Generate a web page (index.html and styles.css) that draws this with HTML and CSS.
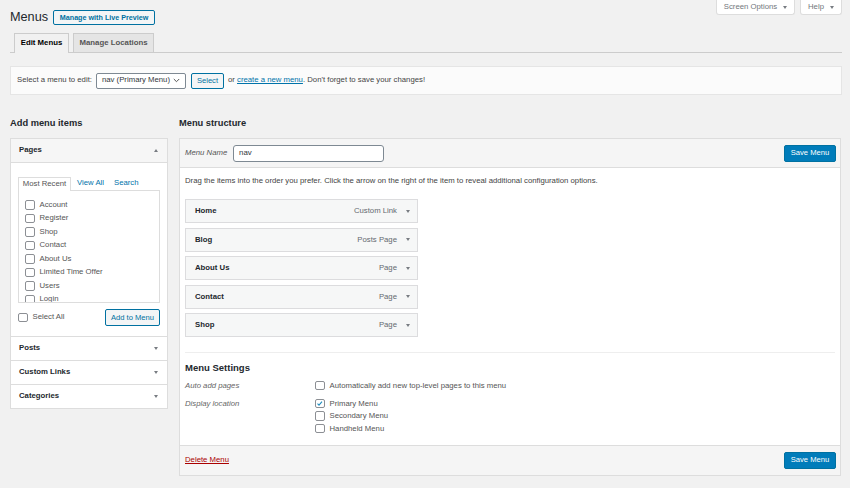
FILE: index.html
```html
<!DOCTYPE html>
<html lang="en">
<head>
<meta charset="utf-8">
<title>Menus</title>
<link rel="stylesheet" href="styles.css">
</head>
<body>
<div class="wrap">
  <div class="top">
    <div class="title-row">
      <h1 class="page-title">Menus</h1>
      <a class="btn btn-secondary btn-preview">Manage with Live Preview</a>
    </div>
    <div class="screen-meta">
      <div class="meta-tab meta-screen">Screen Options <span class="tri-down"></span></div>
      <div class="meta-tab meta-help">Help <span class="tri-down"></span></div>
    </div>
  </div>

  <div class="nav-tabs">
    <div class="nav-tab active tab-edit">Edit Menus</div>
    <div class="nav-tab tab-loc">Manage Locations</div>
  </div>

  <div class="manage-menus">
    <span>Select a menu to edit:</span>
    <div class="select">nav (Primary Menu)
      <svg class="chev" width="7" height="5" viewBox="0 0 7 5"><polyline points="0.8,1 3.5,3.7 6.2,1" fill="none" stroke="#555" stroke-width="1"/></svg>
    </div>
    <a class="btn btn-secondary btn-select">Select</a>
    <span>or <a class="link">create a new menu</a>. Don't forget to save your changes!</span>
  </div>

  <div class="columns">
    <div class="col-left">
      <h2 class="col-heading">Add menu items</h2>
      <div class="acc">
        <div class="acc-title open">Pages <span class="tri-up"></span></div>
        <div class="acc-content">
          <div class="tabs">
            <span class="tab active">Most Recent</span>
            <a class="tab link-plain">View All</a>
            <a class="tab link-plain">Search</a>
          </div>
          <div class="panel">
            <label class="row"><span class="cb"></span>Account</label>
            <label class="row"><span class="cb"></span>Register</label>
            <label class="row"><span class="cb"></span>Shop</label>
            <label class="row"><span class="cb"></span>Contact</label>
            <label class="row"><span class="cb"></span>About Us</label>
            <label class="row"><span class="cb"></span>Limited Time Offer</label>
            <label class="row"><span class="cb"></span>Users</label>
            <label class="row"><span class="cb"></span>Login</label>
          </div>
          <div class="panel-actions">
            <label class="row select-all"><span class="cb"></span>Select All</label>
            <a class="btn btn-secondary btn-add">Add to Menu</a>
          </div>
        </div>
        <div class="acc-title">Posts <span class="tri-down"></span></div>
        <div class="acc-title">Custom Links <span class="tri-down"></span></div>
        <div class="acc-title">Categories <span class="tri-down"></span></div>
      </div>
    </div>

    <div class="col-right">
      <h2 class="col-heading">Menu structure</h2>
      <div class="menu-edit">
        <div class="menu-header">
          <label class="menu-name-label">Menu Name</label>
          <div class="input">nav</div>
          <a class="btn btn-primary save-top">Save Menu</a>
        </div>
        <div class="menu-body">
          <p class="instructions">Drag the items into the order you prefer. Click the arrow on the right of the item to reveal additional configuration options.</p>
          <ul class="menu-items">
            <li class="item"><span class="item-title">Home</span><span class="item-type">Custom Link <span class="tri-down"></span></span></li>
            <li class="item"><span class="item-title">Blog</span><span class="item-type">Posts Page <span class="tri-down"></span></span></li>
            <li class="item"><span class="item-title">About Us</span><span class="item-type">Page <span class="tri-down"></span></span></li>
            <li class="item"><span class="item-title">Contact</span><span class="item-type">Page <span class="tri-down"></span></span></li>
            <li class="item"><span class="item-title">Shop</span><span class="item-type">Page <span class="tri-down"></span></span></li>
          </ul>
          <div class="settings">
            <h3 class="settings-heading">Menu Settings</h3>
            <div class="settings-grid">
              <div class="set-label">Auto add pages</div>
              <div class="set-opts">
                <label class="row"><span class="cb"></span>Automatically add new top-level pages to this menu</label>
              </div>
              <div class="set-label">Display location</div>
              <div class="set-opts">
                <label class="row"><span class="cb checked"><svg width="9" height="9" viewBox="0 0 9 9"><polyline points="1.8,4.6 3.6,6.4 7.2,2.2" fill="none" stroke="#1e8cbe" stroke-width="1.3"/></svg></span>Primary Menu</label>
                <label class="row"><span class="cb"></span>Secondary Menu</label>
                <label class="row"><span class="cb"></span>Handheld Menu</label>
              </div>
            </div>
          </div>
        </div>
        <div class="menu-footer">
          <a class="delete">Delete Menu</a>
          <a class="btn btn-primary">Save Menu</a>
        </div>
      </div>
    </div>
  </div>
</div>
</body>
</html>
```

FILE: styles.css
```css
* { box-sizing: border-box; }

html, body {
  margin: 0;
  padding: 0;
  background: #f1f1f1;
}

body {
  font-family: "Liberation Sans", Arial, sans-serif;
  font-size: 7.75px;
  color: #444;
  line-height: 1.3;
}

a { text-decoration: none; }

.wrap {
  padding: 0 8px 0 10px;
  height: 488px;
}

/* header */
.top {
  display: flex;
  justify-content: space-between;
  align-items: flex-start;
  height: 25px;
}

.title-row {
  margin-top: 10px;
  display: flex;
  align-items: center;
  gap: 5px;
}

.page-title {
  margin: 0;
  font-size: 12.7px;
  font-weight: 400;
  color: #23282d;
  line-height: 15px;
}

.btn {
  display: inline-flex;
  align-items: center;
  justify-content: center;
  border-radius: 2px;
  white-space: nowrap;
  font-size: 7.6px;
}

.btn-secondary {
  border: 1px solid #0071a1;
  color: #0071a1;
  background: #f3f5f6;
}

.btn-primary {
  background: #007cba;
  border: 1px solid #0071a1;
  color: #fff;
  width: 52px;
  height: 17px;
}

.btn-preview {
  width: 102px;
  height: 15px;
  font-weight: 700;
  font-size: 7.2px;
}

.screen-meta {
  display: flex;
  gap: 5px;
}

.meta-tab {
  height: 15px;
  background: #fff;
  border: 1px solid #ddd;
  border-top: 0;
  border-radius: 0 0 3px 3px;
  color: #72777c;
  display: flex;
  align-items: center;
  justify-content: center;
  gap: 6px;
}

.meta-screen { width: 79px; }
.meta-help { width: 42px; }

.tri-down,
.tri-up {
  display: inline-block;
  width: 0;
  height: 0;
  border-left: 2.5px solid transparent;
  border-right: 2.5px solid transparent;
}

.tri-down { border-top: 3px solid #787c82; }
.tri-up { border-bottom: 3px solid #787c82; }

/* nav tabs */
.nav-tabs {
  margin-top: 8px;
  display: flex;
  gap: 4px;
  padding-left: 4px;
  height: 20px;
  border-bottom: 1px solid #ccc;
  align-items: flex-start;
}

.nav-tab {
  height: 20px;
  border: 1px solid #ccc;
  border-bottom: 0;
  background: #e5e5e5;
  color: #555;
  font-weight: 700;
  display: flex;
  align-items: center;
  justify-content: center;
  font-size: 7.8px;
  white-space: nowrap;
}

.nav-tab.active {
  background: #f1f1f1;
  color: #000;
  height: 20px;
}

.tab-edit { width: 55px; }
.tab-loc { width: 81px; height: 19px; }

/* manage menus */
.manage-menus {
  margin-top: 13px;
  height: 29px;
  background: #fbfbfb;
  border: 1px solid #e5e5e5;
  display: flex;
  align-items: center;
  padding: 0 6px;
  gap: 4px;
}

.select {
  width: 90px;
  height: 16px;
  border: 1px solid #7e8993;
  border-radius: 2px;
  background: #fff;
  display: flex;
  align-items: center;
  justify-content: space-between;
  padding: 0 5px 0 5px;
  color: #32373c;
  white-space: nowrap;
}

.btn-select {
  width: 33px;
  height: 16px;
  margin-left: 1px;
}

.link {
  color: #0073aa;
  text-decoration: underline;
}

/* columns */
.columns {
  margin-top: 22px;
  display: flex;
  gap: 11px;
  align-items: flex-start;
}

.col-left { width: 158px; }
.col-right { width: 662px; }

.col-heading {
  margin: 0 0 9px;
  font-size: 9.3px;
  font-weight: 700;
  color: #23282d;
  line-height: 12px;
}

/* accordion */
.acc {
  border: 1px solid #ddd;
  background: #fff;
}

.acc-title {
  height: 24px;
  padding: 0 9px 0 8px;
  display: flex;
  align-items: center;
  justify-content: space-between;
  font-weight: 700;
  color: #23282d;
  border-top: 1px solid #ddd;
}

.acc-title:first-child { border-top: 0; }

.acc-title.open {
  background: #f6f6f6;
  border-bottom: 1px solid #ddd;
}

.acc-content {
  padding: 13px 7px 10px;
}

.tabs {
  display: flex;
  align-items: flex-end;
  height: 14px;
}

.tab {
  height: 14px;
  display: flex;
  align-items: center;
  padding: 0 5px;
  color: #0073aa;
  white-space: nowrap;
}

.tab.active {
  color: #555;
  border: 1px solid #ddd;
  border-bottom: 0;
  background: #fff;
  width: 53px;
  padding: 0;
  justify-content: center;
  position: relative;
  top: 1px;
  margin-right: 1px;
}

.panel {
  height: 113px;
  border: 1px solid #ddd;
  padding: 7px 6px 0;
  overflow: hidden;
}

.row {
  display: flex;
  align-items: center;
  gap: 5px;
  height: 13.5px;
  color: #555;
  white-space: nowrap;
}

.cb {
  width: 9.5px;
  height: 9.5px;
  border: 1px solid #8c8f94;
  border-radius: 2px;
  background: #fff;
  flex: none;
  display: flex;
  align-items: center;
  justify-content: center;
}

.cb svg { display: block; }

.panel-actions {
  margin-top: 6px;
  height: 17px;
  display: flex;
  align-items: center;
  justify-content: space-between;
}

.select-all { gap: 5px; }

.btn-add {
  width: 55px;
  height: 17px;
}

/* menu edit */
.menu-edit {
  border: 1px solid #ddd;
  background: #fff;
}

.menu-header {
  height: 29px;
  background: #f5f5f5;
  border-bottom: 1px solid #ddd;
  display: flex;
  align-items: center;
  padding: 0 4px 0 5px;
}

.menu-name-label {
  font-style: italic;
  color: #555;
  width: 48px;
}

.input {
  width: 151px;
  height: 17px;
  border: 1px solid #7e8993;
  border-radius: 3px;
  background: #fff;
  display: flex;
  align-items: center;
  padding: 0 5px;
  color: #32373c;
  font-size: 7.9px;
}

.save-top { margin-left: auto; }

.menu-body {
  padding: 8px 5px 10px;
}

.instructions {
  margin: 0;
  line-height: 10px;
  color: #444;
}

.menu-items {
  list-style: none;
  margin: 13px 0 0;
  padding: 0;
  width: 233px;
  display: flex;
  flex-direction: column;
  gap: 4.6px;
}

.item {
  height: 24px;
  border: 1px solid #dcdcde;
  background: #f6f7f7;
  display: flex;
  align-items: center;
  justify-content: space-between;
  padding: 0 7px 0 9px;
}

.item-title {
  font-weight: 700;
  color: #23282d;
}

.item-type {
  color: #646970;
  display: flex;
  align-items: center;
  gap: 9px;
}

.settings {
  margin-top: 15px;
  border-top: 1px solid #eee;
}

.settings-heading {
  margin: 9px 0 5px;
  font-size: 9.5px;
  font-weight: 700;
  color: #23282d;
  line-height: 12px;
}

.settings-grid {
  display: grid;
  grid-template-columns: 130px 1fr;
  row-gap: 5px;
}

.set-label {
  font-style: italic;
  color: #666;
  line-height: 13px;
}

.set-opts .row {
  height: 12.5px;
  gap: 5px;
}

.menu-footer {
  height: 30px;
  background: #f5f5f5;
  border-top: 1px solid #ddd;
  display: flex;
  align-items: center;
  justify-content: space-between;
  padding: 0 4px 0 5px;
}

.delete {
  color: #a00;
  text-decoration: underline;
}
```
